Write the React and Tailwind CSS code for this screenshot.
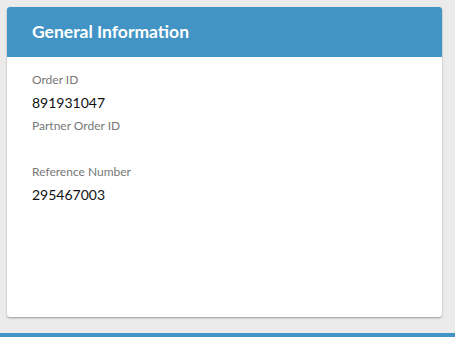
import React from "react";

const fields = [
  { label: "Order ID", value: "891931047" },
  { label: "Partner Order ID", value: "" },
  { label: "Reference Number", value: "295467003" },
];

const App = () => {
  return (
    <div
      className="w-[455px] h-[337px] bg-[#ebebeb] flex flex-col overflow-hidden"
      style={{ fontFamily: "Lato, 'Open Sans', sans-serif" }}>
      {/* ── CARD ── */}
      <div className="mt-[7px] ml-[7px] w-[435px] h-[310px] bg-white rounded-[3px] shadow-[0_1px_2px_rgba(0,0,0,0.35)] overflow-hidden">
        <header className="h-[50px] bg-[#4294c4] flex items-center px-[25px]">
          <h2 className="text-[17.5px] font-bold text-white">General Information</h2>
        </header>
        <div className="px-[25px] pt-3">
          {fields.map((f) => (
            <div key={f.label}>
              <div className="h-[22px] leading-[22px] text-[12px] text-[#777]">{f.label}</div>
              <div className="h-[24px] leading-[24px] text-[14px] text-[#111]">{f.value}</div>
            </div>
          ))}
        </div>
      </div>

      {/* ── BOTTOM BAR ── */}
      <div className="mt-auto h-[4px] bg-[#4294c4]" />
    </div>
  );
};

export default App;
